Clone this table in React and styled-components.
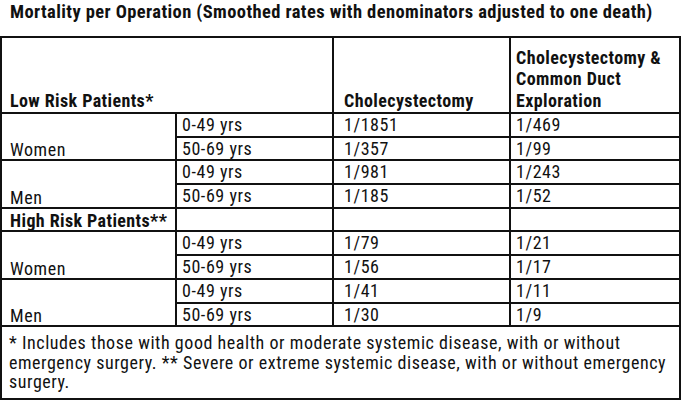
import styled, { createGlobalStyle } from 'styled-components';

const GlobalStyle = createGlobalStyle`
  html, body {
    margin: 0;
    padding: 0;
    background: #ffffff;
  }
  body {
    font-family: Roboto, "Liberation Sans", Arial, sans-serif;
    font-stretch: 85%;
    letter-spacing: 0.4px;
    color: #111;
  }
`;

const lowRisk = [
  { group: 'Women', rows: [['0-49 yrs', '1/1851', '1/469'], ['50-69 yrs', '1/357', '1/99']] },
  { group: 'Men', rows: [['0-49 yrs', '1/981', '1/243'], ['50-69 yrs', '1/185', '1/52']] },
];

const highRisk = [
  { group: 'Women', rows: [['0-49 yrs', '1/79', '1/21'], ['50-69 yrs', '1/56', '1/17']] },
  { group: 'Men', rows: [['0-49 yrs', '1/41', '1/11'], ['50-69 yrs', '1/30', '1/9']] },
];

// column widths taken from the ruled lines of the source table
const columns = [175, 157, 177, 170];

const notes = [
  '* Includes those with good health or moderate systemic disease, with or without',
  'emergency surgery. ** Severe or extreme systemic disease, with or without emergency',
  'surgery.',
];

const GroupRows = ({ data }) =>
  data.map((g) =>
    g.rows.map((r, i) => (
      <Row key={g.group + r[0]}>
        {i === 0 && <GroupCell rowSpan={2}>{g.group}</GroupCell>}
        <AgeCell>{r[0]}</AgeCell>
        <RateCell>{r[1]}</RateCell>
        <RateCell $last>{r[2]}</RateCell>
      </Row>
    ))
  );

const App = () => {
  return (
    <>
      <GlobalStyle />
      <Page>
        <Title>Mortality per Operation (Smoothed rates with denominators adjusted to one death)</Title>
        <Table>
          <colgroup>
            {columns.map((w, i) => (
              <Col key={i} $w={w} />
            ))}
          </colgroup>
          <tbody>
            <HeadRow>
              <HeadCell colSpan={2}>Low Risk Patients*</HeadCell>
              <HeadCell $pad={10}>Cholecystectomy</HeadCell>
              <HeadCell $pad={5}>
                Cholecystectomy &amp;
                <br />
                Common Duct
                <br />
                Exploration
              </HeadCell>
            </HeadRow>
            <GroupRows data={lowRisk} />
            <Row>
              <SectionCell>High Risk Patients**</SectionCell>
              <AgeCell />
              <RateCell />
              <RateCell $last />
            </Row>
            <GroupRows data={highRisk} />
            <NoteRow>
              <NoteCell colSpan={4}>
                {notes.map((n) => (
                  <NoteLine key={n}>{n}</NoteLine>
                ))}
              </NoteCell>
            </NoteRow>
          </tbody>
        </Table>
      </Page>
    </>
  );
};

const Page = styled.div`
  width: 683px;
  height: 404px;
  overflow: hidden;
  padding-top: 1px;
  box-sizing: border-box;
`;

const Title = styled.div`
  font-weight: 700;
  font-size: 18.5px;
  line-height: 22px;
  padding-left: 10px;
  margin-bottom: 13px;
  white-space: nowrap;
`;

const Table = styled.table`
  border-collapse: collapse;
  table-layout: fixed;
  width: 681px;
  border: 2px solid #111;
  font-size: 18px;
  line-height: 19px;
  letter-spacing: 0.55px;

  td {
    border: 2px solid #111;
  }
`;

const Col = styled.col`
  width: ${(p) => p.$w}px;
`;

const HeadRow = styled.tr`
  height: 76px;
`;

const HeadCell = styled.td`
  font-weight: 700;
  letter-spacing: 0.4px;
  line-height: 21.5px;
  vertical-align: bottom;
  padding: 0 4px 1px ${(p) => p.$pad ?? 8}px;
`;

const Row = styled.tr`
  height: 23.7px;
`;

const NoteRow = styled.tr`
  height: 73px;
`;

const GroupCell = styled.td`
  vertical-align: bottom;
  padding: 0 4px 0 8px;
`;

const SectionCell = styled.td`
  font-weight: 700;
  letter-spacing: 0.4px;
  vertical-align: bottom;
  padding: 0 2px 0 8px;
  white-space: nowrap;
`;

const AgeCell = styled.td`
  vertical-align: top;
  padding: 1px 4px 0 5px;
`;

const RateCell = styled.td`
  vertical-align: top;
  padding: 1px 4px 0 ${(p) => (p.$last ? 5 : 10)}px;
`;

const NoteCell = styled.td`
  vertical-align: top;
  padding: 6px 4px 0 7px;
`;

const NoteLine = styled.div`
  line-height: 19.5px;
  white-space: nowrap;
`;

export default App;
